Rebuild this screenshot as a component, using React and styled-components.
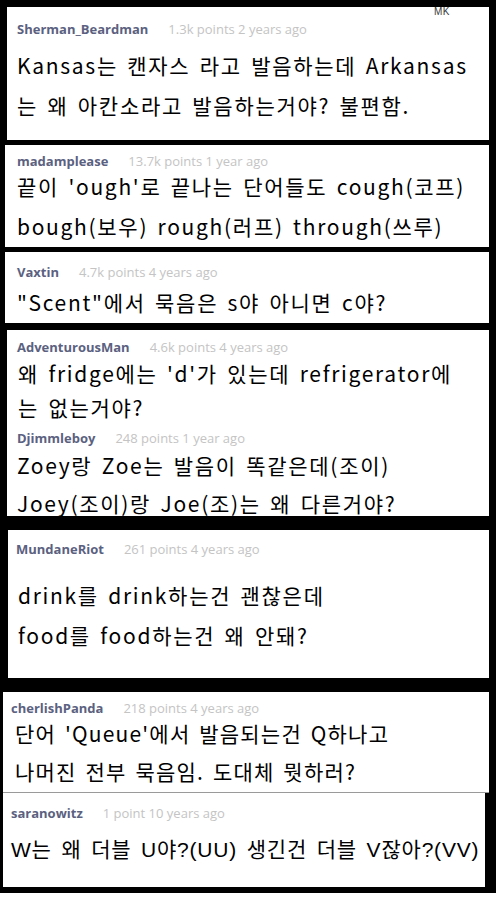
import styled, { createGlobalStyle } from 'styled-components'

const GlobalStyle = createGlobalStyle`
    html, body {
        margin: 0;
        padding: 0;
        background: #000;
    }
    body {
        width: 496px;
        height: 902px;
        overflow: hidden;
    }
`

const Page = styled.main`
    display: flex;
    flex-direction: column;
    width: 496px;
    height: 902px;
    background: #000;
`

// cards

const Card = styled.section`
    position: relative;
    box-sizing: border-box;
    display: flex;
    flex-direction: column;
    height: ${p => p.$h}px;
    margin: ${p => p.$mt}px ${p => 496 - p.$r}px 0 ${p => p.$l}px;
    padding: ${p => p.$pt}px 0 0 ${p => p.$pl}px;
    background: #fff;
    border-bottom: ${p => p.$line ? '1px solid #9a9a9a' : 'none'};
`

const Watermark = styled.span`
    position: absolute;
    top: -1px;
    right: 39px;
    font-family: "Liberation Sans", sans-serif;
    font-size: 10px;
    line-height: 12px;
    color: #3a3a3a;
    letter-spacing: 0.5px;
`

// header

const Meta = styled.div`
    display: flex;
    align-items: center;
    gap: 20px;
    height: 14px;
    margin-top: ${p => p.$mt || 0}px;
    padding-left: ${p => p.$pl || 0}px;
    font-family: "Open Sans", "Noto Sans", sans-serif;
    font-size: 13px;
    line-height: 14px;
`

const User = styled.span`
    font-weight: 700;
    color: #5b6180;
`

const Points = styled.span`
    color: #c4c4c4;
`

// body

const Body = styled.div`
    display: flex;
    flex-direction: column;
    gap: ${p => p.$gap}px;
    margin-top: ${p => p.$mt}px;
    padding-left: ${p => p.$pl || 0}px;
    font-family: ${p => p.$alt ? '"Liberation Sans", "Noto Sans CJK KR", sans-serif' : '"Noto Sans CJK KR", sans-serif'};
    font-size: 21px;
    letter-spacing: ${p => p.$ls ?? 1.7}px;
    word-spacing: 3px;
    color: #000;
`

const Line = styled.span`
    display: block;
    height: 22px;
    line-height: 22px;
    white-space: nowrap;
`

const Footer = styled.div`
    flex: 1;
    margin-top: 6px;
    background: #fff;
`

function Comment({ user, points, nameTop, nameLeft, bodyTop, bodyLeft, gap = 18, ls, alt, lines }) {
    return (
        <>
            <Meta $mt={nameTop} $pl={nameLeft}>
                <User>{user}</User>
                <Points>{points}</Points>
            </Meta>
            <Body $mt={bodyTop} $pl={bodyLeft} $gap={gap} $ls={ls} $alt={alt}>
                {lines.map((l, i) => <Line key={i}>{l}</Line>)}
            </Body>
        </>
    )
}

export default function App() {
    return (
        <Page>
            <GlobalStyle />

            <Card $mt={7} $l={7} $r={489} $h={133} $pt={15} $pl={10}>
                <Watermark>MK</Watermark>
                <Comment
                    user="Sherman_Beardman" points="1.3k points 2 years ago"
                    bodyTop={18} bodyLeft={-2}
                    lines={['Kansas는 캔자스 라고 발음하는데 Arkansas', '는 왜 아칸소라고 발음하는거야? 불편함.']}
                />
            </Card>

            <Card $mt={5} $l={5} $r={489} $h={102} $pt={9} $pl={12}>
                <Comment
                    user="madamplease" points="13.7k points 1 year ago"
                    bodyTop={7} gap={18}
                    lines={["끝이 'ough'로 끝나는 단어들도 cough(코프)", 'bough(보우) rough(러프) through(쓰루)']}
                />
            </Card>

            <Card $mt={5} $l={5} $r={489} $h={71} $pt={13} $pl={12}>
                <Comment
                    user="Vaxtin" points="4.7k points 4 years ago"
                    bodyTop={12} bodyLeft={-2}
                    lines={['"Scent"에서 묵음은 s야 아니면 c야?']}
                />
            </Card>

            <Card $mt={7} $l={7} $r={489} $h={186} $pt={10} $pl={10}>
                <Comment
                    user="AdventurousMan" points="4.6k points 4 years ago"
                    bodyTop={8} bodyLeft={1} gap={12}
                    lines={["왜 fridge에는 'd'가 있는데 refrigerator에", '는 없는거야?']}
                />
                <Comment
                    user="Djimmleboy" points="248 points 1 year ago"
                    nameTop={13} nameLeft={-1}
                    bodyTop={9} gap={16}
                    lines={['Zoey랑 Zoe는 발음이 똑같은데(조이)', 'Joey(조이)랑 Joe(조)는 왜 다른거야?']}
                />
            </Card>

            <Card $mt={14} $l={8} $r={489} $h={148} $pt={12} $pl={8}>
                <Comment
                    user="MundaneRiot" points="261 points 4 years ago"
                    bodyTop={28} bodyLeft={2}
                    lines={['drink를 drink하는건 괜찮은데', 'food를 food하는건 왜 안돼?']}
                />
            </Card>

            <Card $mt={14} $l={3} $r={489} $h={101} $pt={9} $pl={8} $line>
                <Comment
                    user="cherlishPanda" points="218 points 4 years ago"
                    bodyTop={7} bodyLeft={4} ls={1.2} gap={16}
                    lines={["단어 'Queue'에서 발음되는건 Q하나고", '나머진 전부 묵음임. 도대체 뭣하러?']}
                />
            </Card>

            <Card $mt={0} $l={3} $r={485} $h={94} $pt={13} $pl={8}>
                <Comment
                    user="saranowitz" points="1 point 10 years ago"
                    bodyTop={19} bodyLeft={-2} ls={0.8} alt
                    lines={['W는 왜 더블 U야?(UU) 생긴건 더블 V잖아?(VV)']}
                />
            </Card>

            <Footer />
        </Page>
    )
}
